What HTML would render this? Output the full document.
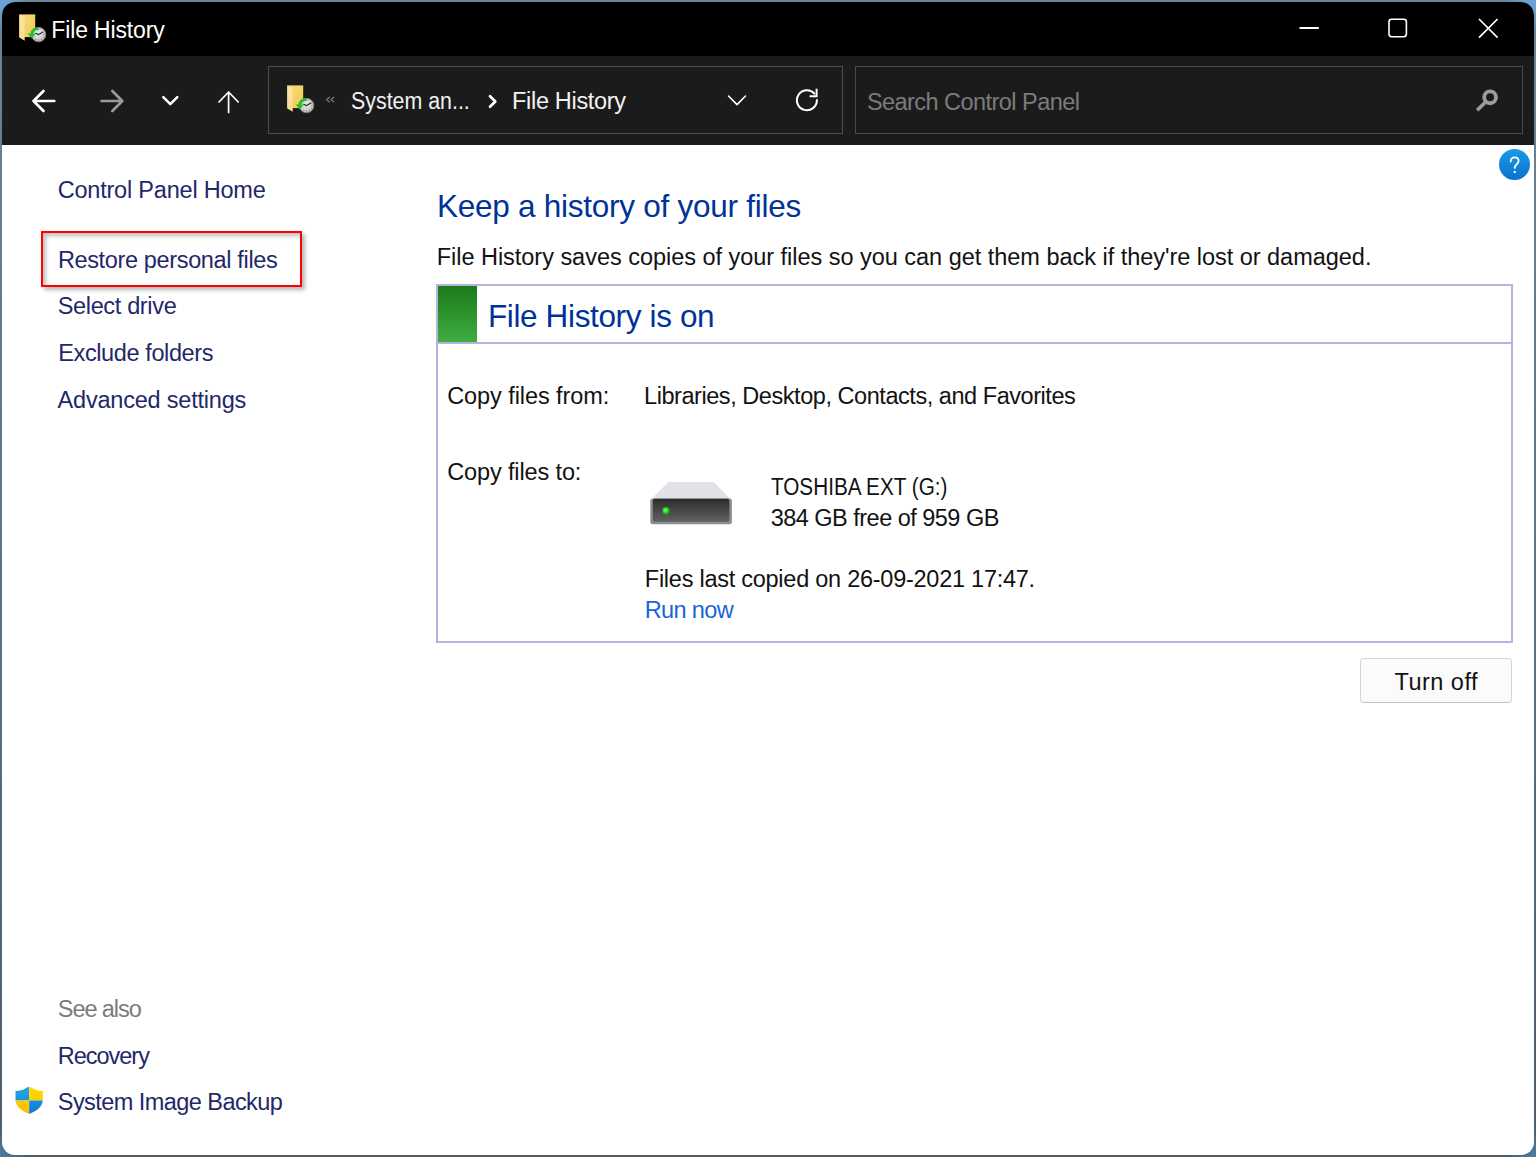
<!DOCTYPE html>
<html><head><meta charset="utf-8">
<style>
html,body{margin:0;padding:0;width:1536px;height:1157px;overflow:hidden}
body{position:relative;background:radial-gradient(circle at 0 0,#6aa3d4 0,#6aa3d4 10px,rgba(106,163,212,0) 30px),radial-gradient(circle at 100% 0,#6aa3d4 0,#6aa3d4 10px,rgba(106,163,212,0) 30px),radial-gradient(circle at 0 100%,#4f7ca2 0,rgba(79,124,162,0) 30px),radial-gradient(circle at 100% 100%,#4f7ca2 0,rgba(79,124,162,0) 30px),linear-gradient(180deg,#6a8598 0%,#5e7588 45%,#4e5c68 100%);font-family:"Liberation Sans",sans-serif}
.win{position:absolute;left:2px;top:2px;width:1532px;height:1153px;border-radius:13px;overflow:hidden;background:#fff}
.c{position:absolute;left:-2px;top:-2px;width:1536px;height:1157px}
.abs{position:absolute}
.t{position:absolute;white-space:nowrap;line-height:1}
svg{position:absolute;overflow:visible}
</style></head><body>
<div class="win"><div class="c">
<!-- title bar -->
<div class="abs" style="left:0;top:0;width:1536px;height:56px;background:#000"></div>
<!-- toolbar -->
<div class="abs" style="left:0;top:56px;width:1536px;height:89px;background:#1b1b1b"></div>
<!-- address box -->
<div class="abs" style="left:268px;top:66px;width:573px;height:66px;border:1px solid #4e4e4e"></div>
<!-- search box -->
<div class="abs" style="left:855px;top:66px;width:666px;height:66px;border:1px solid #4a4a4a"></div>

<svg width="0" height="0" style="position:absolute">
 <defs>
  <linearGradient id="fb" x1="0" y1="0" x2="1" y2="1"><stop offset="0" stop-color="#f8dc7a"/><stop offset="1" stop-color="#f0c95a"/></linearGradient>
  <linearGradient id="ff" x1="0" y1="0" x2="0" y2="1"><stop offset="0" stop-color="#fbe6a6"/><stop offset="1" stop-color="#f7dd86"/></linearGradient>
  <radialGradient id="cl" cx="0.45" cy="0.4" r="0.65"><stop offset="0" stop-color="#e9e9e9"/><stop offset="0.75" stop-color="#c9c9c9"/><stop offset="1" stop-color="#9c9c9c"/></radialGradient>
  <g id="fhicon">
   <rect x="1.3" y="1.4" width="15.9" height="22.7" fill="url(#fb)"/>
   <path d="M1.3 1.4 L6.7 5.6 L6.7 27.8 L1.3 24.4 Z" fill="url(#ff)"/>
   <circle cx="20.6" cy="21.6" r="7.2" fill="url(#cl)" stroke="#7d7d7d" stroke-width="1"/>
   <g fill="#6a6a6a"><circle cx="20.6" cy="16.2" r="0.6"/><circle cx="26" cy="21.6" r="0.6"/><circle cx="20.6" cy="27" r="0.6"/><circle cx="23.3" cy="26.3" r="0.5"/><circle cx="25.3" cy="24.3" r="0.5"/><circle cx="17.9" cy="26.3" r="0.5"/><circle cx="25.3" cy="18.9" r="0.5"/></g>
   <path d="M20.6 21.6 L17.6 20.2 M20.6 21.6 L24.6 19.2" stroke="#333" stroke-width="1.2" stroke-linecap="round"/>
   <path d="M20 14.3 C15 14.6 12.6 17.5 12.4 20.6 L9.6 20.4 L13.8 25.6 L17.8 20.8 L15.4 20.7 C15.8 18.5 17.4 17 20 16.8 Z" fill="#22c226"/>
  </g>
 </defs>
</svg>
<svg style="left:18px;top:13px" width="30" height="30"><use href="#fhicon"/></svg>
<svg style="left:285.7px;top:83.8px" width="30" height="30"><use href="#fhicon"/></svg>

<!-- window controls -->
<svg style="left:0;top:0" width="1536" height="56">
 <path d="M1299.5 28 H1318.8" stroke="#fff" stroke-width="2"/>
 <rect x="1389" y="19.3" width="17.4" height="17.4" rx="2.6" fill="none" stroke="#fff" stroke-width="1.6"/>
 <path d="M1479 19 L1497.6 37.6 M1497.6 19 L1479 37.6" stroke="#fff" stroke-width="1.7"/>
</svg>

<!-- nav icons -->
<svg style="left:0;top:56px" width="860" height="89">
 <g fill="none" stroke-linecap="round" stroke-linejoin="round">
  <path d="M33.5 45 H54.3 M43.5 35 L33.5 45 L43.5 55" stroke="#fff" stroke-width="2.7"/>
  <path d="M101.5 45 H122.3 M112.3 35 L122.3 45 L112.3 55" stroke="#9b9b9b" stroke-width="2.7"/>
  <path d="M163.3 41.2 L170.3 48.2 L177.3 41.2" stroke="#fff" stroke-width="2.5"/>
  <path d="M228.6 36 V56.5 M219 46 L228.6 36 L238.2 46" stroke="#fff" stroke-width="1.7"/>
  <path d="M329.5 41.3 L326.5 43.6 L329.5 45.9 M333.8 41.3 L330.8 43.6 L333.8 45.9" stroke="#8a8a8a" stroke-width="1.1"/>
  <path d="M490 40.2 L495.3 45.5 L490 50.8" stroke="#fff" stroke-width="2.7"/>
  <path d="M728.5 40 L737 48.6 L745.5 40" stroke="#fff" stroke-width="1.6"/>
  <path d="M816.9 44 A10 10 0 1 1 814.4 37.6" stroke="#fff" stroke-width="2"/>
  <path d="M816.6 32.8 V40.2 H809.6" stroke="#fff" stroke-width="2" stroke-linecap="butt" stroke-linejoin="miter"/>
 </g>
</svg>
<!-- search icon -->
<svg style="left:1470px;top:85px" width="30" height="30">
 <circle cx="20.1" cy="12.3" r="5.9" fill="none" stroke="#9c9c9c" stroke-width="3.9"/>
 <path d="M15.6 17 L7.2 25.3" stroke="#9c9c9c" stroke-width="3.6"/>
</svg>

<!-- help -->
<svg style="left:1497px;top:147px" width="36" height="36">
 <defs><linearGradient id="hb" x1="0" y1="0" x2="0" y2="1"><stop offset="0" stop-color="#1a9be6"/><stop offset="1" stop-color="#0a72cf"/></linearGradient></defs>
 <circle cx="17.5" cy="17.5" r="15.5" fill="url(#hb)"/>
 <path d="M13.7 14.6 C13.7 11.8 15.5 10.3 17.7 10.3 C20.1 10.3 21.6 11.9 21.6 13.9 C21.6 16.9 17.7 17.5 17.7 20.9" fill="none" stroke="#fff" stroke-width="1.8" stroke-linecap="round"/>
 <circle cx="17.7" cy="24.9" r="1.2" fill="#fff"/>
</svg>

<!-- red highlight -->
<div class="abs" style="left:41px;top:231px;width:257px;height:52px;border:2px solid #ff0000;box-shadow:3px 3px 4px rgba(0,0,0,0.28), inset 3px 3px 4px rgba(0,0,0,0.25)"></div>

<!-- shield -->
<svg style="left:14px;top:1086px" width="30" height="30">
 <defs>
  <linearGradient id="sb" x1="0" y1="0" x2="0" y2="1"><stop offset="0" stop-color="#24a6e6"/><stop offset="1" stop-color="#1a96e0"/></linearGradient>
  <linearGradient id="sy" x1="0" y1="0" x2="0" y2="1"><stop offset="0" stop-color="#ffdc00"/><stop offset="1" stop-color="#ffcc00"/></linearGradient>
  <linearGradient id="sy2" x1="0" y1="0" x2="0" y2="1"><stop offset="0" stop-color="#ffcc00"/><stop offset="1" stop-color="#fdb800"/></linearGradient>
  <linearGradient id="sb2" x1="0" y1="0" x2="0" y2="1"><stop offset="0" stop-color="#1690dc"/><stop offset="1" stop-color="#0a78d4"/></linearGradient>
 </defs>
 <path d="M1.5 5 C6 5 9 4 11.6 2.3 C13 1.3 14.2 0.9 15.2 0.9 V14.4 H1.5 Z" fill="url(#sb)"/>
 <path d="M28.9 5 C24.4 5 21.4 4 18.8 2.3 C17.4 1.3 16.2 0.9 15.2 0.9 V14.4 H28.9 Z" fill="url(#sy)"/>
 <path d="M1.5 14.4 H15.2 V27.9 C8 25 2.4 21 1.5 14.4 Z" fill="url(#sy2)"/>
 <path d="M28.9 14.4 H15.2 V27.9 C22.4 25 28 21 28.9 14.4 Z" fill="url(#sb2)"/>
</svg>

<!-- status box -->
<div class="abs" style="left:436px;top:284px;width:1073px;height:355px;border:2px solid #b1b5e0"></div>
<div class="abs" style="left:438px;top:342px;width:1073px;height:2px;background:#b1b5e0"></div>
<div class="abs" style="left:438px;top:286px;width:39px;height:56px;background:linear-gradient(#1b7a1b,#40ad40)"></div>

<!-- drive icon -->
<svg style="left:645px;top:475px" width="95" height="55">
 <defs>
  <linearGradient id="dk" x1="0" y1="0" x2="0" y2="1"><stop offset="0" stop-color="#2c2c2c"/><stop offset="1" stop-color="#616161"/></linearGradient>
  <radialGradient id="led" cx="0.4" cy="0.45" r="0.6"><stop offset="0" stop-color="#9cff9c"/><stop offset="0.5" stop-color="#2ad82a"/><stop offset="1" stop-color="#12a012"/></radialGradient>
 </defs>
 <path d="M23.5 7 L68.6 7 L85.5 23.9 L6.5 23.9 Z" fill="#e1e2e5"/>
 <rect x="5.3" y="23.6" width="81.6" height="25.6" rx="2.5" fill="#8e8e8e"/>
 <rect x="7.8" y="23.8" width="76.6" height="23" rx="2" fill="url(#dk)"/>
 <circle cx="21.1" cy="35.7" r="3.7" fill="url(#led)"/>
</svg>

<!-- turn off button -->
<div class="abs" style="left:1360px;top:658px;width:150px;height:43px;border:1px solid #d6d6d6;border-bottom-color:#c4c4c4;border-radius:4px;background:#fbfbfb"></div>

<div class="t" style="left:51.30px;top:19.00px;font-size:23.0px;letter-spacing:-0.145px;color:#ffffff;">File History</div>
<div class="t" style="left:351.00px;top:90.00px;font-size:23.5px;transform:scaleX(0.9096);transform-origin:0 0;color:#f2f2f2">System an...</div>
<div class="t" style="left:512.10px;top:90.00px;font-size:23.5px;letter-spacing:-0.327px;color:#f2f2f2;">File History</div>
<div class="t" style="left:866.90px;top:91.00px;font-size:23.5px;letter-spacing:-0.542px;color:#7b7b7b;">Search Control Panel</div>
<div class="t" style="left:57.70px;top:179.00px;font-size:23.5px;letter-spacing:-0.206px;color:#1f2868;">Control Panel Home</div>
<div class="t" style="left:57.90px;top:249.00px;font-size:23.5px;letter-spacing:-0.355px;color:#1f2868;">Restore personal files</div>
<div class="t" style="left:57.70px;top:295.00px;font-size:23.5px;letter-spacing:-0.341px;color:#1f2868;">Select drive</div>
<div class="t" style="left:58.30px;top:342.00px;font-size:23.5px;letter-spacing:-0.396px;color:#1f2868;">Exclude folders</div>
<div class="t" style="left:57.60px;top:389.00px;font-size:23.5px;letter-spacing:-0.206px;color:#1f2868;">Advanced settings</div>
<div class="t" style="left:57.80px;top:998.00px;font-size:23.5px;letter-spacing:-1.071px;color:#7b7b7b;">See also</div>
<div class="t" style="left:57.80px;top:1045.00px;font-size:23.5px;letter-spacing:-1.021px;color:#1f2868;">Recovery</div>
<div class="t" style="left:57.80px;top:1091.00px;font-size:23.5px;letter-spacing:-0.556px;color:#1f2868;">System Image Backup</div>
<div class="t" style="left:436.90px;top:191.00px;font-size:31.5px;letter-spacing:-0.257px;color:#003399;">Keep a history of your files</div>
<div class="t" style="left:436.70px;top:246.00px;font-size:23.5px;letter-spacing:-0.026px;color:#121212;">File History saves copies of your files so you can get them back if they're lost or damaged.</div>
<div class="t" style="left:487.90px;top:301.00px;font-size:31.5px;letter-spacing:-0.356px;color:#003399;">File History is on</div>
<div class="t" style="left:447.20px;top:385.00px;font-size:23.5px;letter-spacing:-0.077px;color:#121212;">Copy files from:</div>
<div class="t" style="left:644.10px;top:385.00px;font-size:23.5px;letter-spacing:-0.450px;color:#121212;">Libraries, Desktop, Contacts, and Favorites</div>
<div class="t" style="left:447.20px;top:461.00px;font-size:23.5px;letter-spacing:-0.127px;color:#121212;">Copy files to:</div>
<div class="t" style="left:770.70px;top:476.00px;font-size:23.5px;transform:scaleX(0.8809);transform-origin:0 0;color:#121212">TOSHIBA EXT (G:)</div>
<div class="t" style="left:770.70px;top:507.00px;font-size:23.5px;letter-spacing:-0.520px;color:#121212;">384 GB free of 959 GB</div>
<div class="t" style="left:644.80px;top:568.00px;font-size:23.5px;letter-spacing:-0.255px;color:#121212;">Files last copied on 26-09-2021 17:47.</div>
<div class="t" style="left:644.70px;top:599.00px;font-size:23.5px;letter-spacing:-0.617px;color:#1766d4;">Run now</div>
<div class="t" style="left:1394.60px;top:671.00px;font-size:23.5px;letter-spacing:0.457px;color:#121212;">Turn off</div>
</div></div>
</body></html>
